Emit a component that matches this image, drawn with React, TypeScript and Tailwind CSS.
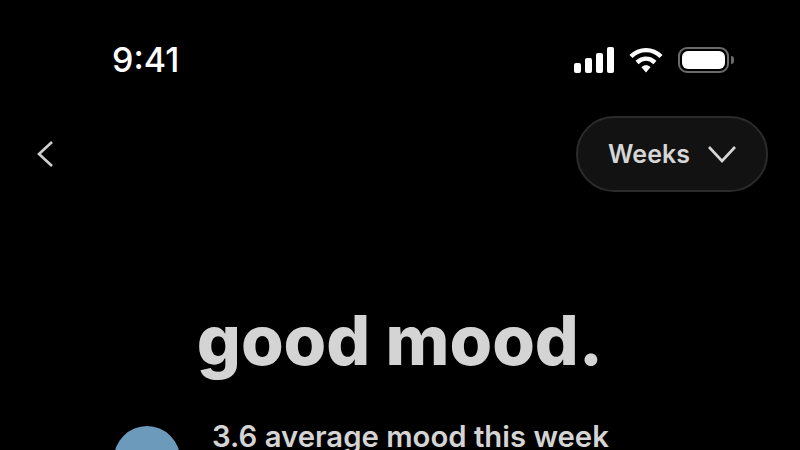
function StatusIcons() {
  return (
    <div className="flex items-center gap-[15px]">
      <svg width="40" height="26" viewBox="0 0 40 26" fill="#fff">
        <rect x="0" y="16" width="7" height="10" rx="2" />
        <rect x="11" y="11" width="7" height="15" rx="2" />
        <rect x="22" y="6" width="7" height="20" rx="2" />
        <rect x="33" y="0" width="7" height="26" rx="2" />
      </svg>
      <svg width="34" height="26" viewBox="0 0 34 26" fill="none">
        <path d="M2 9.5C10.5 1 23.5 1 32 9.5" stroke="#fff" strokeWidth="4.4" />
        <path d="M8 15.5C13.5 10.5 20.5 10.5 26 15.5" stroke="#fff" strokeWidth="4.4" />
        <path d="M12.5 20.2C15.2 17.6 18.8 17.6 21.5 20.2L17 25.5Z" fill="#fff" />
      </svg>
      <div className="flex items-center gap-[2px]">
        <div className="flex h-[26px] w-[51px] items-center justify-center rounded-[9px] border-2 border-[#6b6b6b]">
          <div className="h-[18px] w-[43px] rounded-[6px] bg-white" />
        </div>
        <div className="h-[8px] w-[3px] rounded-r-full bg-[#6b6b6b]" />
      </div>
    </div>
  );
}

export default function App() {
  return (
    <div className="h-[450px] w-[800px] overflow-hidden bg-black font-['Inter',sans-serif]">
      <div className="flex h-[116px] items-start justify-between pl-[112px] pr-[66px] pt-[40px]">
        <span className="text-[34px] font-medium leading-[40px] text-white">9:41</span>
        <div className="pt-[7px]">
          <StatusIcons />
        </div>
      </div>

      <div className="flex h-[76px] items-center justify-between pl-[37px] pr-[32px]">
        <svg width="16" height="26" viewBox="0 0 16 26" fill="none" stroke="#cfcfcf" strokeWidth="2.6">
          <path d="M15 1L2 13L15 25" />
        </svg>
        <button className="flex h-[76px] w-[192px] items-center justify-center gap-[18px] rounded-full border-2 border-[#2b2b2b] bg-[#121212]">
          <span className="text-[25px] font-semibold leading-none text-[#d6d6d6]">Weeks</span>
          <svg width="28" height="17" viewBox="0 0 28 17" fill="none" stroke="#d6d6d6" strokeWidth="2.6">
            <path d="M1 1L14 15L27 1" />
          </svg>
        </button>
      </div>

      <h1 className="mt-[108px] text-center text-[69px] font-extrabold leading-[80px] text-[#d4d4d4]">good mood.</h1>

      <div className="ml-[114px] flex items-start gap-[32px] pt-[44px]">
        <div className="mt-[2px] h-[66px] w-[66px] shrink-0 rounded-full bg-[#6c9abb]" />
        <p className="text-[29.3px] font-semibold leading-[26px] text-[#d4d4d4]">3.6 average mood this week</p>
      </div>
    </div>
  );
}
